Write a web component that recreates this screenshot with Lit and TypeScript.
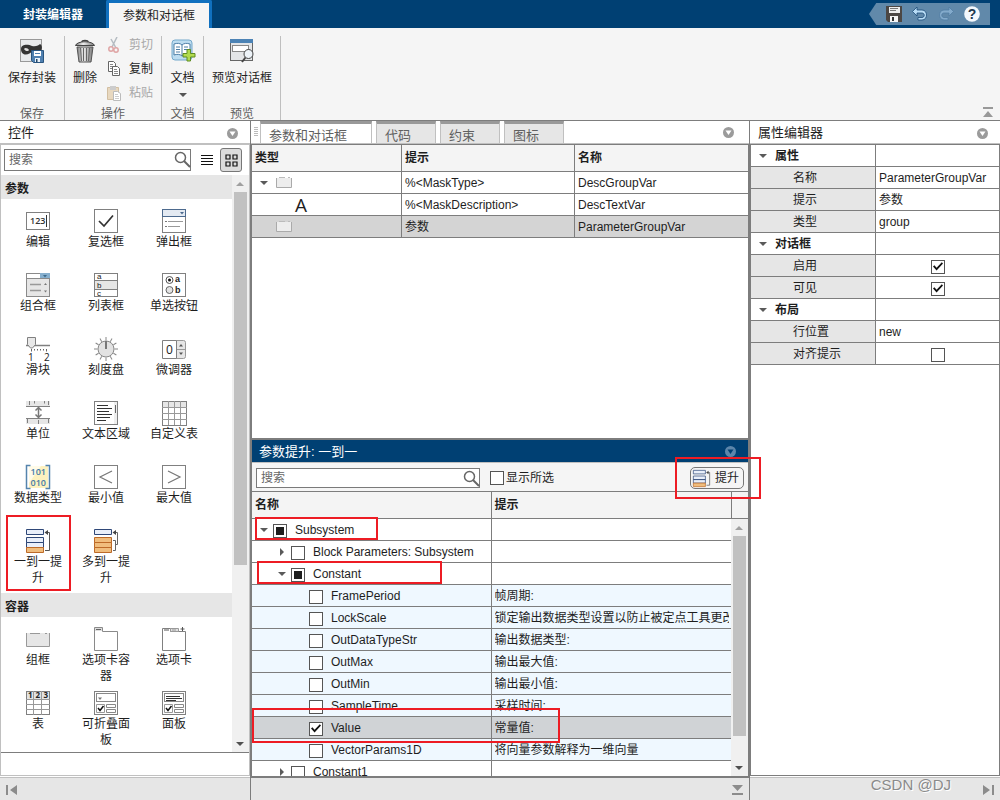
import { LitElement, html, svg, css, nothing } from "lit";
import { customElement, property } from "lit/decorators.js";
import { classMap } from "lit/directives/class-map.js";
import { styleMap } from "lit/directives/style-map.js";

const shared = css`
  :host { font-family: "Liberation Sans", "Noto Sans CJK SC", sans-serif; font-size: 12px; line-height: 16px; color: #1e1e1e; }
  * { box-sizing: border-box; }
  button { font: inherit; color: inherit; background: none; border: 0; padding: 0; margin: 0; white-space: nowrap; }
  input { font: inherit; margin: 0; }
  svg { display: block; flex: none; }
  h2, h3 { margin: 0; font-size: 13px; font-weight: 400; }
`;

const G = "#808080";

/* Control palette glyphs, all on a 24x24 grid. */
const glyphs: Record<string, unknown> = {
  edit: svg`<rect x="0.5" y="3.5" width="23" height="17" fill="#fff" stroke=${G}/><text x="4" y="15" font-size="9" font-weight="600" fill="#333" font-family="Open Sans">123</text><path d="M20.5 6v12" stroke="#333"/>`,
  check: svg`<rect x="0.5" y="0.5" width="23" height="23" fill="#fff" stroke=${G}/><path d="M5 12l5 5L19 6.500" fill="none" stroke="#333" stroke-width="1.700"/>`,
  popup: svg`<rect x="0.5" y="0.5" width="23" height="23" fill="#fff" stroke=${G}/><rect x="0.500" y="0.500" width="23" height="7" fill="#e4eaf2" stroke="#4d6a8e"/><path d="M18 3h4l-2 2.500z" fill="#4d6a8e"/><path d="M3 12.500h2M3 17.500h2" stroke="#777"/><path d="M6 12.500h15M6 17.500h12" stroke="#999"/>`,
  combo: svg`<rect x="0.5" y="0.5" width="23" height="23" fill="#e6e6e6" stroke="#8a8a8a"/><rect x="1" y="1" width="13" height="4" fill="#fff"/><rect x="14" y="0" width="10" height="5.500" fill="#86afce"/><path d="M17 2h4l-2 2.500z" fill="#3b6a8c"/><path d="M0 5.500h24" stroke="#8a8a8a"/><path d="M4 11.500h11M4 17.500h11" stroke="#999" stroke-width="1.500"/><path d="M18 12l1.500-2 1.500 2zM18 17.500h3l-1.500 2z" fill="#777"/>`,
  list: svg`<rect x="0.5" y="0.5" width="23" height="23" fill="#fff" stroke=${G}/><rect x="1" y="8" width="22" height="8" fill="#e6e6e6"/><path d="M0 7.500h24M0 16.500h24" stroke=${G}/><g font-size="8" font-family="Liberation Sans" fill="#222"><text x="3" y="6">a</text><text x="3" y="15">b</text><text x="3" y="23">c</text></g>`,
  radio: svg`<rect x="0.5" y="0.5" width="23" height="23" fill="#fff" stroke=${G}/><circle cx="7.500" cy="7" r="3.500" fill="#fff" stroke="#555"/><circle cx="7.500" cy="7" r="1.500" fill="#111"/><circle cx="7.500" cy="17" r="3.500" fill="#e2e2e2" stroke="#666"/><g font-size="9" font-family="Liberation Sans" font-weight="700" fill="#222"><text x="13" y="9">a</text><text x="13" y="20">b</text></g>`,
  slider: svg`<path d="M0 8.500h24" stroke=${G} stroke-width="1.500"/><path d="M1.500 0.500h8v7L6.500 11h-2l-3-3.500z" fill="#e8e8e8" stroke=${G}/><path d="M5.500 12v2.500M20.500 12v2.500M8.500 12v1.500M11.500 12v1.500M14.500 12v1.500M17.500 12v1.500" stroke="#666"/><g font-size="10" fill="#222" font-family="Open Sans"><text x="2" y="24">1</text><text x="18" y="24">2</text></g>`,
  knob: svg`<g stroke="#888">${Array.from({ length: 12 }, (_, i) => svg`<path d="M12 0v3.500" transform="rotate(${i * 30} 12 12)"/>`)}</g><circle cx="12" cy="12" r="8" fill="#e2e2e2" stroke="#888"/><path d="M12 4v8" stroke="#777" stroke-width="2"/>`,
  spin: svg`<rect x="0.5" y="3.500" width="23" height="18" rx="2" fill="#e6e6e6" stroke="#999"/><path d="M0.500 3.500h14v18h-14z" fill="#fff" stroke=${G}/><path d="M15 12.500h8" stroke="#999"/><path d="M17 9.500h4L19 7zM17 15.500h4L19 18z" fill="#555"/><text x="4" y="17" font-size="12" fill="#222" font-family="Open Sans">0</text>`,
  unit: svg`<path d="M0 0h24v5H0zM0 18h24v5H0z" fill="#e6e6e6"/><path d="M0 5.500h24M0 17.500h24M3.500 0v4M8.500 0v2.500M18.500 0v2.500M22.500 0v4M1.500 18v4M12.500 19v4M22.500 18v4" stroke=${G}/><path d="M12.500 6v11M9.500 9.500L12.500 6.500l3 3M9.500 13.500l3 3 3-3" fill="none" stroke="#777" stroke-width="1.500"/>`,
  textarea: svg`<rect x="0.5" y="0.5" width="23" height="23" fill="#fff" stroke=${G}/><path d="M20 1h3v22h-3z" fill="#eee"/><path d="M3 5.500h11M3 8.500h15M3 11.500h12M3 14.500h15M3 17.500h13M3 20.500h9" transform="translate(0 -1)" stroke="#333"/><path d="M21.500 4v8" stroke="#666"/>`,
  grid: svg`<rect x="0.5" y="0.5" width="24" height="24" fill="#fff" stroke=${G}/><path d="M1 1h23v5H1z" fill="#e6e6e6"/><path d="M0 6.500h25M0 12.500h25M0 18.500h25M6.500 0v24M12.500 0v24M18.500 0v24" stroke="#999"/>`,
  dtype: svg`<rect x="3" y="1" width="19" height="22" fill="#fdf1bf"/><path d="M3 1h12L3 18z" fill="#fffbe8"/><path d="M4.500 0.500h-4v23h4M19.500 0.500h4v23h-4" fill="none" stroke="#5584ad" stroke-width="1.500"/><g fill="#4479a8" font-size="9" font-weight="600" font-family="Open Sans"><text x="4.500" y="10">101</text><text x="4.500" y="21">010</text></g>`,
  min: svg`<rect x="0.5" y="0.5" width="23" height="23" fill="#fff" stroke=${G}/><path d="M18 6L6 12l12 6" fill="none" stroke="#777" stroke-width="1.200"/>`,
  max: svg`<rect x="0.5" y="0.5" width="23" height="23" fill="#fff" stroke=${G}/><path d="M6 6l12 6-12 6" fill="none" stroke="#777" stroke-width="1.200"/>`,
  one: svg`<g fill="#e9effa" stroke="#2f4878"><path d="M0.500 0.500h17v5h-17zM0.500 8.500h17v5h-17zM0.500 13.500h17v5h-17z"/></g><path d="M0.500 18.500h17v5h-17z" fill="#f0bd7d" stroke="#bd6a28"/><path d="M19 21.500h4.500v-18h-3" fill="none" stroke="#555"/><path d="M18.500 3.500L22 1v5z" fill="#444"/>`,
  many: svg`<path d="M0.500 0.500h17v5h-17z" fill="#e9effa" stroke="#2f4878"/><path d="M0.500 8.500h17v5h-17zM0.500 13.500h17v5h-17zM0.500 18.500h17v5h-17z" fill="#f0bd7d" stroke="#bd6a28"/><path d="M19 11.500h2.500v10H19M21.500 15.500h2v-12h-3" fill="none" stroke="#666"/><path d="M18.500 3.500L22 1v5z" fill="#444"/>`,
  group: svg`<path d="M0.500 6v13.500h23V6" fill="#e6e6e6" stroke="#999"/><path d="M4 6.500h10M19 6.500h2" stroke="#999"/>`,
  tabs: svg`<path d="M0.500 23.500v-23h8v4h15v19z" fill="#fff" stroke="#8a8a8a"/><path d="M1 1h7v3H1z" fill="#ddd"/><path d="M2 2.500h5" stroke="#666"/>`,
  tab: svg`<path d="M0.500 23.500v-22h8v3h15v19z" fill="#fff" stroke=${G}/><path d="M8.500 1.500h8v3h-8z" fill="#e0e0e0" stroke="#999"/><path d="M2 3h5M20.500 0v4M18.500 2h4" stroke="#555"/><path d="M10 3h4" stroke="#999"/>`,
  table: svg`<rect x="0.5" y="0.5" width="23" height="23" fill="#fff" stroke=${G}/><rect x="1" y="1" width="22" height="7" fill="#e3e3e3"/><path d="M0 8.500h24M0 13.500h24M0 18.500h24M7.500 0v24M15.500 0v24" stroke="#999"/><g font-size="8" font-weight="700" fill="#222" font-family="Open Sans"><text x="2" y="7">1</text><text x="9.500" y="7">2</text><text x="17.500" y="7">3</text></g>`,
  collapse: svg`<rect x="0.5" y="0.5" width="23" height="23" fill="#fff" stroke=${G}/><rect x="2.500" y="2.500" width="19" height="8" fill="#fff" stroke="#888"/><path d="M4 6.500h4l-2 2.500z" fill="#777"/><path d="M2.500 13.500h8v8h-8z" fill="#fff" stroke="#999"/><path d="M4 17l2 2.500L9.500 15" fill="none" stroke="#111" stroke-width="1.500"/><path d="M12.500 13.500h9v3h-9zM12.500 18.500h9v3h-9z" fill="#fff" stroke="#888"/>`,
  panel: svg`<rect x="0.5" y="0.5" width="23" height="23" fill="#fff" stroke=${G}/><rect x="2.500" y="2.500" width="19" height="8" fill="#fff" stroke="#888"/><path d="M4 5.500h14M4 7.500h16M4 9.500h10" stroke="#333"/><path d="M2.500 13.500h8v8h-8z" fill="#fff" stroke="#999"/><path d="M4 17l2 2.500L9.500 15" fill="none" stroke="#111" stroke-width="1.500"/><path d="M12.500 13.500h9v3h-9zM12.500 18.500h9v3h-9z" fill="#fff" stroke="#888"/>`,
};

const glyph = (name: string, size = 24) =>
  html`<svg width=${size} height=${size} viewBox="0 0 24 24" overflow="visible" aria-hidden="true">${glyphs[name]}</svg>`;

const triangle = (open: boolean) => html`<svg width="8" height="8" viewBox="0 0 8 8" aria-hidden="true">
  <path d=${open ? "M0 2h8L4 6z" : "M2 0v8l4-4z"} fill="#5a5a5a"/></svg>`;

const panelMenu = (ring: string, mark: string) => html`<button class="round" aria-label="面板操作">
  <svg width="11" height="11" viewBox="0 0 11 11"><circle cx="5.500" cy="5.500" r="5.500" fill=${ring}/><path d="M2.500 3.500h6l-3 4.500z" fill=${mark}/></svg></button>`;

const lens = html`<svg class="lens" width="17" height="17" viewBox="0 0 17 17" aria-hidden="true">
  <circle cx="6.500" cy="6.500" r="5" fill="none" stroke="#666" stroke-width="1.500"/><path d="M10 10l6 6" stroke="#666" stroke-width="2"/></svg>`;

const panelCss = css`
  .head { height: 22px; flex: none; display: flex; align-items: center; justify-content: space-between; padding: 2px 12px 0 8px; background: #fff; }
  .round { display: flex; }
  .search { position: relative; display: flex; }
  .search input { width: 100%; height: 100%; border: 1px solid #7a7a7a; background: #fff; padding: 0 24px 0 4px; border-radius: 0; outline: 0; }
  .search input::placeholder { color: #666; opacity: 1; }
  .lens { position: absolute; right: 0; top: 2px; }
  .mark { position: absolute; border: 2px solid #ed1c24; pointer-events: none; z-index: 3; }
  table { width: 100%; border-collapse: separate; border-spacing: 0; table-layout: fixed; }
  th, td { height: 22px; padding: 0 2px 0 3px; text-align: left; white-space: nowrap; border-bottom: 1px solid #7d7d7d; border-right: 1px solid #7d7d7d; }
  th { font-weight: 700; }
  .top th { height: 27px; background: #f4f4f4; }
  tr > :last-child { border-right: 0; }
  .cell { display: flex; align-items: center; }
  .clip { display: block; overflow: hidden; }
  input[type="checkbox"] { appearance: none; width: 14px; height: 14px; border: 1px solid #555; background: #fff; display: grid; place-items: center; flex: none; border-radius: 0; }
  input[type="checkbox"]:indeterminate::before { content: ""; width: 8px; height: 8px; background: #1e1e1e; }
  input[type="checkbox"]:checked::before { content: ""; width: 10px; height: 10px; background: #111; clip-path: polygon(0 50%, 14% 38%, 36% 62%, 88% 8%, 100% 20%, 36% 90%); }
`;

@customElement("scroll-strip")
class ScrollStrip extends LitElement {
  @property({ type: Number }) thumb = 1;
  @property({ type: Number }) rest = 1;
  static styles = [shared, css`
    :host { display: flex; flex-direction: column; width: 17px; flex: 1; background: #f0f0f0; padding-right: 1px; }
    button { height: 17px; display: grid; place-items: center; flex: none; }
    .thumb { background: #c1c1c1; margin: 0 1px 0 2px; flex-basis: 0; }
    .rest { flex-basis: 0; }
  `];
  render() {
    return html`
      <button aria-label="向上滚动"><svg width="8" height="8"><path d="M0 6h8L4 2z" fill="#a0a0a0"/></svg></button>
      <div class="thumb" style=${styleMap({ flexGrow: String(this.thumb) })}></div>
      <div class="rest" style=${styleMap({ flexGrow: String(this.rest) })}></div>
      <button aria-label="向下滚动"><svg width="8" height="8"><path d="M0 2h8L4 6z" fill="#505050"/></svg></button>`;
  }
}

@customElement("tool-strip")
class ToolStrip extends LitElement {
  static styles = [shared, css`
    :host { display: block; }
    .title { height: 28px; display: flex; background: #004073; }
    .page { padding: 2px 23px 0; color: #fff; font-weight: 700; height: 28px; }
    .page.active { background: #f5f5f5; color: #1e1e1e; font-weight: 400; border: 3px solid #1070bf; border-bottom: 0; padding: 0 14px; border-radius: 2px 2px 0 0; }
    .quick { margin: 3px 10px 3px auto; display: flex; align-items: center; gap: 10px; padding: 0 10px 0 17px; background: #6189aa; clip-path: polygon(6% 0, 100% 0, 100% 100%, 6% 100%, 0 50%); }
    .quick button { display: flex; }
    .strip { display: flex; height: 93px; background: #f5f5f5; border-bottom: 1px solid #7d7d7d; padding-top: 8px; }
    section { display: flex; flex-direction: column; justify-content: space-between; align-items: center; border-right: 1px solid #bfbfbf; padding: 0 8px; min-width: 42px; }
    .row { display: flex; gap: 10px; }
    .big { display: flex; flex-direction: column; align-items: center; padding-top: 3px; gap: 7px; }
    .small { display: flex; flex-direction: column; margin-top: -3px; }
    .small button { height: 24px; display: flex; align-items: center; gap: 8px; }
    .small button:disabled { color: #a8a8a8; }
    .name { color: #606060; height: 13px; line-height: 14px; }
    .fold { margin-left: auto; align-self: flex-end; padding: 0 7px 2px 0; }
  `];
  render() {
    return html`
      <nav class="title">
        <button class="page">封装编辑器</button><button class="page active">参数和对话框</button>
        <div class="quick">
          <button aria-label="保存"><svg width="16" height="16" viewBox="0 0 16 16"><path d="M0 0h16v16H2l-2-2z" fill="#4c4744"/><path d="M3 1h11v6H3z" fill="#eee"/><path d="M4 2.500h8M4 4.500h6" stroke="#777"/><path d="M4 10h8v6H4z" fill="#f5f5f5"/><path d="M6 11h2v4H6z" fill="#333"/></svg></button>
          <button aria-label="撤销"><svg width="16" height="16" viewBox="0 0 16 16"><path d="M5 1v3h5c6 0 6 10 0 10H6v-2.500h4c3 0 3-4.500 0-4.500H5v3L0.500 5.500z" fill="#b9dcf5" stroke="#1d4c79" stroke-width="0.800"/></svg></button>
          <button aria-label="重做"><svg width="16" height="16" viewBox="0 0 16 16"><path d="M11 1v3H6C0 4 0 14 6 14h4v-2.500H6C3 11.500 3 7 6 7h5v3l4.500-4.500z" fill="#83aacb" stroke="#527da3" stroke-width="0.800"/></svg></button>
          <button aria-label="帮助"><svg width="16" height="16" viewBox="0 0 16 16"><circle cx="8" cy="8" r="7.800" fill="#f4f8fc"/><text x="8" y="13" text-anchor="middle" font-size="14" font-weight="700" fill="#23394f">?</text></svg></button>
        </div>
      </nav>
      <div class="strip">
        <section>
          <button class="big"><svg width="24" height="24" viewBox="0 0 24 24"><rect x="0.500" y="0.500" width="21" height="22" fill="#e8eaec" stroke="#999"/><path d="M1 10C1 5 8 5 12 7c4 1 7-1 8-2 3 2 2 6 0 8-2 1-5 1-8-1-2 4-11 6-11-2z" fill="#333"/><path d="M4 10c1-2 4-1 5 1-1 2-4 1-5-1z" fill="#ddd"/><path d="M11.500 11.500h12v12h-10l-2-2z" fill="#4f80b0" stroke="#2a557f"/><path d="M14 12h7v5h-7z" fill="#fff"/><path d="M15 14.500h5" stroke="#4f80b0"/><path d="M15 19h5v4h-5z" fill="#e8f1fa"/><path d="M16 20h1.500v3H16z" fill="#24486b"/></svg>保存封装</button>
          <span class="name">保存</span>
        </section>
        <section>
          <div class="row">
            <button class="big"><svg width="24" height="24" viewBox="0 0 24 24"><defs><linearGradient id="bin"><stop offset="0" stop-color="#777"/><stop offset=".4" stop-color="#eee"/><stop offset="1" stop-color="#777"/></linearGradient></defs><path d="M9 3c0-2 6-2 6 0" fill="none" stroke="#444" stroke-width="1.500"/><path d="M2.500 6.500C4 1.500 20 1.500 21.500 6.500z" fill="url(#bin)" stroke="#444"/><path d="M4 8h16l-2 15H6z" fill="url(#bin)" stroke="#555"/><path d="M7.500 9l1 13M10.500 9v13M13.500 9v13M16.500 9l-1 13" stroke="#666"/></svg>删除</button>
            <div class="small">
              <button disabled><svg width="14" height="16" viewBox="0 0 14 16"><path d="M10 0L5 10M4 2l5 9" stroke="#b5bcc2" stroke-width="1.500"/><circle cx="4" cy="12" r="2.200" fill="none" stroke="#dfa5a5" stroke-width="1.500"/><circle cx="9" cy="13" r="2.200" fill="none" stroke="#dfa5a5" stroke-width="1.500"/></svg>剪切</button>
              <button><svg width="14" height="16" viewBox="0 0 14 16"><path d="M1.500 0.500h5l2 2v8h-7z" fill="#fff" stroke="#666"/><path d="M3 3.500h3M3 5.500h3M3 7.500h3" stroke="#888"/><path d="M5.500 5.500h5l2 2v7h-7z" fill="#fff" stroke="#666"/><path d="M7 8.500h3M7 10.500h4M7 12.500h4" stroke="#888"/></svg>复制</button>
              <button disabled><svg width="14" height="16" viewBox="0 0 14 16"><path d="M0.500 2.500h11v12h-11z" fill="#e8d8bf" stroke="#d2bfa2"/><path d="M3 1h6v4H3z" fill="#ccc"/><path d="M6.500 6.500h4l3 2v7h-7z" fill="#fff" stroke="#bbb"/><path d="M8 9.500h3M8 11.500h4M8 13.500h4" stroke="#ccc"/></svg>粘贴</button>
            </div>
          </div>
          <span class="name">操作</span>
        </section>
        <section>
          <button class="big"><svg width="24" height="24" viewBox="0 0 24 24" overflow="visible"><rect x="1" y="1" width="20" height="20" rx="3" fill="#bcdcf0" stroke="#75a9cb"/><path d="M3 5c3-1 6-1 8 1 2-2 5-2 8-1v11c-3-1-6-1-8 1-2-2-5-2-8-1z" fill="#fff" stroke="#4c7ea6"/><path d="M11 6v11M5 8h4M5 10.500h4M5 13h4M13 8h4M13 10.500h4" stroke="#4c7ea6"/><path d="M16 10.500h3.500v4H24V18h-4.500v4H16v-4h-4v-3.500h4z" fill="#b2db4e" stroke="#5f8d23"/></svg>文档
            <svg width="8" height="5"><path d="M0 0h8L4 4z" fill="#555"/></svg></button>
          <span class="name">文档</span>
        </section>
        <section>
          <button class="big"><svg width="24" height="24" viewBox="0 0 24 24" overflow="visible"><rect x="0.500" y="0.500" width="22" height="21" fill="#e3e5e7" stroke="#666"/><rect x="0" y="0" width="23" height="4" fill="#4c83b5"/><rect x="2.500" y="6.500" width="16" height="6" fill="#fff" stroke="#888"/><circle cx="18.500" cy="15" r="4.500" fill="#edf3f8" stroke="#444"/><path d="M15.500 18.500L12 23" stroke="#444" stroke-width="2"/></svg>预览对话框</button>
          <span class="name">预览</span>
        </section>
        <button class="fold" aria-label="最小化工具条"><svg width="10" height="11"><path d="M0 0h10v2H0zM5 4l5 6H0z" fill="#999"/></svg></button>
      </div>`;
  }
}

const PARAMS: [string, string][] = [
  ["edit", "编辑"], ["check", "复选框"], ["popup", "弹出框"], ["combo", "组合框"], ["list", "列表框"], ["radio", "单选按钮"],
  ["slider", "滑块"], ["knob", "刻度盘"], ["spin", "微调器"], ["unit", "单位"], ["textarea", "文本区域"], ["grid", "自定义表"],
  ["dtype", "数据类型"], ["min", "最小值"], ["max", "最大值"], ["one", "一到一提升"], ["many", "多到一提升"],
];
const BOXES: [string, string][] = [
  ["group", "组框"], ["tabs", "选项卡容器"], ["tab", "选项卡"], ["table", "表"], ["collapse", "可折叠面板"], ["panel", "面板"],
];

@customElement("control-palette")
class ControlPalette extends LitElement {
  static styles = [shared, panelCss, css`
    :host { display: flex; flex-direction: column; min-height: 0; min-width: 0; background: #fff; }
    .body { flex: 1; min-height: 0; display: flex; flex-direction: column; border: 1px solid #c0c0c0; border-top-width: 2px; margin-bottom: 1px; }
    .tools { display: flex; padding: 3px 7px 3px 3px; height: 30px; align-items: center; flex: none; }
    .search { flex: 1; height: 22px; }
    .tools > svg { margin: 0 7px 0 10px; }
    .view { width: 22px; height: 24px; border: 1px solid #777; border-radius: 3px; background: #dcdcdc; display: grid; place-items: center; }
    .scroll { flex: 1; min-height: 0; display: flex; border-bottom: 1px solid #7d7d7d; }
    .items { flex: 1; overflow: hidden; }
    scroll-strip { flex: none; width: 17px; }
    h3 { height: 24px; line-height: 28px; background: #e6e6e6; font-size: 12px; font-weight: 700; padding-left: 4px; }
    .grid { display: grid; grid-template-columns: repeat(3, 68px); grid-auto-rows: 64px; padding: 10px 0 0 3px; }
    .item { position: relative; display: flex; flex-direction: column; align-items: center; white-space: normal; gap: 1px; padding: 0 9px; }
    .item .mark { inset: -14px 1px 2px 2px; }
    .status { height: 22px; flex: none; }
  `];
  group(title: string, list: [string, string][]) {
    return html`<h3>${title}</h3><div class="grid">${list.map(([icon, name]) => html`
      <button class="item">${glyph(icon)}<span>${name}</span>${icon === "one" ? html`<i class="mark"></i>` : nothing}</button>`)}</div>`;
  }
  render() {
    return html`
      <div class="head"><h2>控件</h2>${panelMenu("#9b9b9b", "#fff")}</div>
      <div class="body">
        <div class="tools">
          <label class="search"><input type="text" aria-label="搜索控件" placeholder="搜索">${lens}</label>
          <svg width="12" height="12"><path d="M0 1.500h12M0 4.500h12M0 7.500h12M0 10.500h12" stroke="#111"/></svg>
          <button class="view" aria-label="网格视图"><svg width="13" height="13"><path d="M1 1h4v4H1zM8 1h4v4H8zM1 8h4v4H1zM8 8h4v4H8z" fill="none" stroke="#111" stroke-width="1.200"/></svg></button>
        </div>
        <div class="scroll">
          <div class="items">${this.group("参数", PARAMS)}${this.group("容器", BOXES)}</div>
          <scroll-strip .thumb=${373} .rest=${170}></scroll-strip>
        </div>
        <div class="status"></div>
      </div>`;
  }
}

interface Row { name: string; prompt?: string; level: number; open?: boolean; state?: "some" | "on"; leaf?: boolean }
const ROWS: Row[] = [
  { name: "Subsystem", level: 0, open: true, state: "some" },
  { name: "Block Parameters: Subsystem", level: 1, open: false },
  { name: "Constant", level: 1, open: true, state: "some" },
  { name: "FramePeriod", prompt: "帧周期:", level: 2, leaf: true },
  { name: "LockScale", prompt: "锁定输出数据类型设置以防止被定点工具更改", level: 2, leaf: true },
  { name: "OutDataTypeStr", prompt: "输出数据类型:", level: 2, leaf: true },
  { name: "OutMax", prompt: "输出最大值:", level: 2, leaf: true },
  { name: "OutMin", prompt: "输出最小值:", level: 2, leaf: true },
  { name: "SampleTime", prompt: "采样时间:", level: 2, leaf: true },
  { name: "Value", prompt: "常量值:", level: 2, leaf: true, state: "on" },
  { name: "VectorParams1D", prompt: "将向量参数解释为一维向量", level: 2, leaf: true },
  { name: "Constant1", level: 1, open: false },
];

@customElement("dialog-editor")
class DialogEditor extends LitElement {
  static styles = [shared, panelCss, css`
    :host { display: flex; flex-direction: column; min-height: 0; min-width: 0; background: #fff; border: 1px solid #7d7d7d; border-width: 0 1px; }
    .head { height: 23px; padding: 0 15px 0 3px; align-items: stretch; }
    .tabs { display: flex; gap: 4px; margin-right: auto; }
    .tabs button { font-size: 13px; color: #606060; border-top: 3px solid #999; background: #e6e6e6; border-right: 1px solid #c0c0c0; border-left: 1px solid #c0c0c0; padding: 4px 24px 0 8px; }
    .tabs .active { background: #fff; }
    .grip { width: 4px; height: 10px; margin: 6px 2px 0 0; background: repeating-linear-gradient(#bbb 0 1px, #fff 1px 2px); }
    .round { align-items: center; }
    .upper { flex: 293 1 0; min-height: 0; border: 1px solid #7d7d7d; border-bottom-width: 2px; overflow: hidden; box-shadow: 0 -1px #c0c0c0; }
    .upper .kind { width: 150px; }
    .upper tr.sel td { background: #d4d4d4; }
    .upper .cell { gap: 8px; padding-left: 5px; }
    .blank { width: 8px; }
    .letter { padding-left: 40px; font: 19px/20px "Open Sans", sans-serif; height: 20px; }
    .lower { position: relative; flex: 336 1 0; min-height: 0; display: flex; flex-direction: column; border: 1px solid #7d7d7d; border-top: 0; }
    .bar { height: 22px; flex: none; background: #004073; color: #fff; display: flex; justify-content: space-between; align-items: center; padding: 1px 12px 0 7px; }
    .tools { height: 30px; flex: none; display: flex; align-items: center; border-top: 1px solid #c0c0c0; border-bottom: 1px solid #7d7d7d; background: #f5f5f5; padding: 2px 4px 0; }
    .search { width: 224px; height: 20px; margin-right: 10px; }
    .show { display: flex; align-items: center; gap: 2px; }
    .promote { margin-left: auto; width: 54px; height: 22px; border: 1px solid #777; border-radius: 5px; display: flex; align-items: center; gap: 5px; padding: 0 3px 0 2px; }
    .list { flex: 1; min-height: 0; display: flex; }
    .wrap { flex: 1; min-width: 0; overflow: hidden; }
    .side { width: 17px; display: flex; flex-direction: column; }
    .corner { height: 27px; background: #f4f4f4; border-left: 1px solid #7d7d7d; border-bottom: 1px solid #7d7d7d; flex: none; }
    .leaf td { background: #eff8ff; }
    .leaf.sel td { background: #d0d3d6; }
    .tree { gap: 5px; }
    .tree label { margin-left: 3px; }
    .tree input { margin-top: 2px; }
    .m1 { left: 3px; top: 77px; width: 123px; height: 23px; }
    .m2 { left: 5px; top: 121px; width: 185px; height: 23px; }
    .m3 { left: 0; top: 268px; width: 308px; height: 35px; }
    .m4 { right: -13px; top: 17px; width: 86px; height: 42px; }
  `];
  render() {
    const box = html`<svg width="16" height="11"><path d="M0.500 1v9.500h15V1" fill="#ededed" stroke="#aaa"/><path d="M3 0.500h6M12 0.500h2" stroke="#bbb"/></svg>`;
    return html`
      <div class="head">
        <span class="grip"></span>
        <div class="tabs"><button class="active">参数和对话框</button><button>代码</button><button>约束</button><button>图标</button></div>
        ${panelMenu("#9b9b9b", "#fff")}
      </div>
      <div class="upper">
        <table>
          <thead class="top"><tr><th class="kind">类型</th><th>提示</th><th>名称</th></tr></thead>
          <tbody>
            <tr><td><div class="cell">${triangle(true)}${box}</div></td><td>%&lt;MaskType&gt;</td><td>DescGroupVar</td></tr>
            <tr><td><div class="letter">A</div></td><td>%&lt;MaskDescription&gt;</td><td>DescTextVar</td></tr>
            <tr class="sel"><td><div class="cell"><span class="blank"></span>${box}</div></td><td>参数</td><td>ParameterGroupVar</td></tr>
          </tbody>
        </table>
      </div>
      <div class="lower">
        <div class="bar"><h2>参数提升: 一到一</h2>${panelMenu("#5c86ab", "#004073")}</div>
        <div class="tools">
          <label class="search"><input type="text" aria-label="搜索参数" placeholder="搜索">${lens}</label>
          <label class="show"><input type="checkbox">显示所选</label>
          <button class="promote">${glyph("one", 17)}提升</button>
        </div>
        <div class="list">
          <div class="wrap"><table>
            <thead class="top"><tr><th>名称</th><th>提示</th></tr></thead>
            <tbody>${ROWS.map((r, i) => html`
              <tr class=${classMap({ leaf: !!r.leaf, sel: r.state === "on" })}>
                <td><div class="cell tree" style=${styleMap({ paddingLeft: `${5 + r.level * 18}px` })}>
                  ${r.leaf ? html`<span class="blank"></span>` : triangle(!!r.open)}
                  <input type="checkbox" id="row${i}" ?checked=${r.state === "on"} .indeterminate=${r.state === "some"}>
                  <label for="row${i}">${r.name}</label></div></td>
                <td><span class="clip">${r.prompt ?? ""}</span></td>
              </tr>`)}</tbody>
          </table></div>
          <div class="side"><div class="corner"></div><scroll-strip .thumb=${200} .rest=${23}></scroll-strip></div>
        </div>
        <i class="mark m1"></i><i class="mark m2"></i><i class="mark m3"></i><i class="mark m4"></i>
      </div>`;
  }
}

const PROPS: [string, (string | boolean)?][] = [
  ["属性"], ["名称", "ParameterGroupVar"], ["提示", "参数"], ["类型", "group"],
  ["对话框"], ["启用", true], ["可见", true],
  ["布局"], ["行位置", "new"], ["对齐提示", false],
];

@customElement("property-editor")
class PropertyEditor extends LitElement {
  static styles = [shared, panelCss, css`
    :host { display: flex; flex-direction: column; min-height: 0; min-width: 0; background: #fff; }
    .head { height: 23px; padding-top: 1px; }
    .body { flex: 1; border: 1px solid #7d7d7d; box-shadow: 0 -1px #c0c0c0; margin-bottom: 1px; }
    th { width: 125px; font-weight: 400; background: #e6e6e6; padding-left: 42px; }
    .group th { font-weight: 700; background: #fff; padding-left: 8px; }
    .group .cell { gap: 8px; }
    .body input { margin: 2px auto 0; }
  `];
  render() {
    return html`
      <div class="head"><h2>属性编辑器</h2>${panelMenu("#9b9b9b", "#fff")}</div>
      <div class="body"><table>${PROPS.map(([k, v], i) => v === undefined
        ? html`<tr class="group"><th><div class="cell">${triangle(true)}${k}</div></th><td></td></tr>`
        : html`<tr><th>${typeof v === "boolean" ? html`<label for="p${i}">${k}</label>` : k}</th>
            <td>${typeof v === "boolean" ? html`<input id="p${i}" type="checkbox" ?checked=${v}>` : v}</td></tr>`)}</table></div>`;
  }
}

@customElement("app-root")
class AppRoot extends LitElement {
  static styles = [shared, css`
    :host { display: flex; flex-direction: column; height: 100vh; overflow: hidden; background: #fff; }
    main, footer { display: grid; grid-template-columns: 1fr 2fr 1fr; }
    main { flex: 1; min-height: 0; }
    footer { position: relative; height: 23px; background: #e6e6e6; flex: none; }
    footer > div { display: flex; align-items: center; padding: 1px 6px 0; border-top: 1px solid #c0c0c0; }
    footer .mid { border: 1px solid #7d7d7d; border-bottom: 0; justify-content: flex-end; }
    footer .end { justify-content: flex-end; }
    .stamp { position: absolute; right: 49px; top: -2px; font-size: 15px; line-height: 20px; color: #8a8a8a; text-shadow: 1px 1px #fff; }
  `];
  render() {
    return html`
      <tool-strip></tool-strip>
      <main><control-palette></control-palette><dialog-editor></dialog-editor><property-editor></property-editor></main>
      <footer>
        <div><button aria-label="折叠左侧"><svg width="11" height="12"><path d="M0 1h2v10H0zM11 1v10L4 6z" fill="#8c8c8c"/></svg></button></div>
        <div class="mid"><button aria-label="折叠底部"><svg width="11" height="12"><path d="M0 1h11L5.500 7zM0 9h11v2H0z" fill="#8c8c8c"/></svg></button></div>
        <div class="end"><button aria-label="折叠右侧"><svg width="11" height="12"><path d="M9 1h2v10H9zM0 1v10l7-5z" fill="#8c8c8c"/></svg></button></div>
        <span class="stamp">CSDN @DJ</span>
      </footer>`;
  }
}
